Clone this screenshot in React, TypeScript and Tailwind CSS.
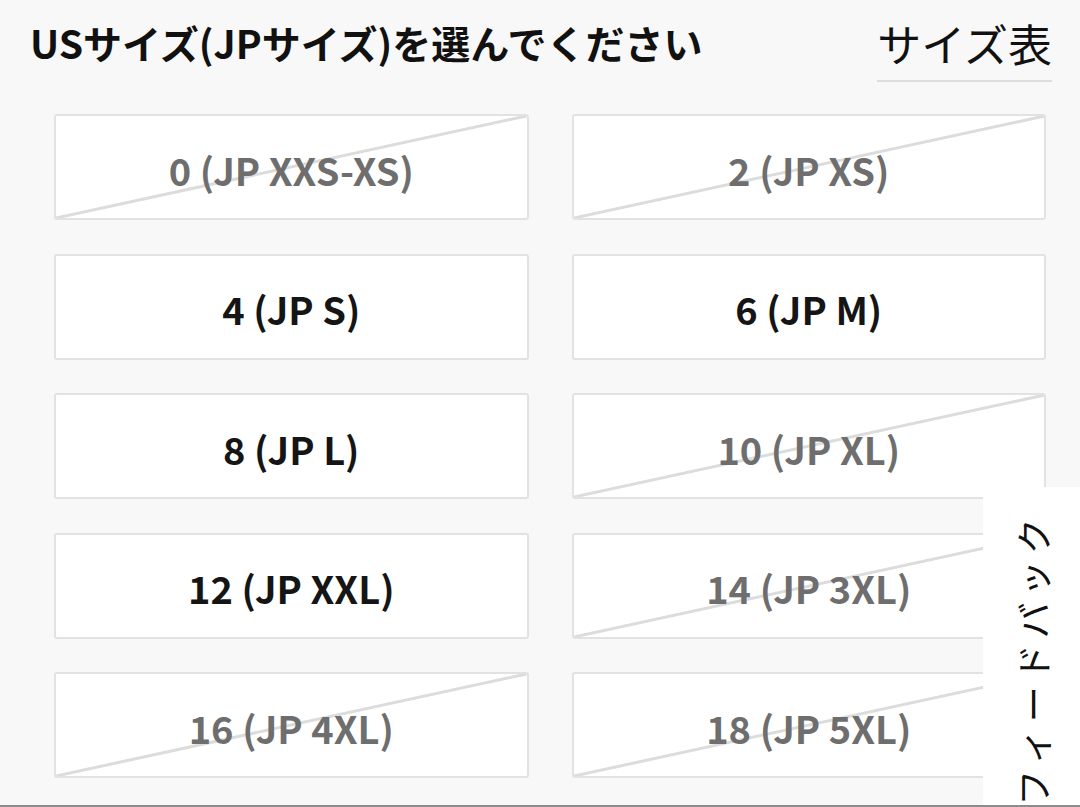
import React from "react";

type SizeOption = {
  us: string;
  jp: string;
  available: boolean;
};

const sizes: SizeOption[] = [
  { us: "0", jp: "XXS-XS", available: false },
  { us: "2", jp: "XS", available: false },
  { us: "4", jp: "S", available: true },
  { us: "6", jp: "M", available: true },
  { us: "8", jp: "L", available: true },
  { us: "10", jp: "XL", available: false },
  { us: "12", jp: "XXL", available: true },
  { us: "14", jp: "3XL", available: false },
  { us: "16", jp: "4XL", available: false },
  { us: "18", jp: "5XL", available: false },
];

const font = {
  fontFamily: '"Noto Sans CJK JP", "Noto Sans", sans-serif',
};

function SizeButton({ size }: { size: SizeOption }) {
  return (
    <button
      type="button"
      className="relative flex h-[106px] items-center justify-center overflow-hidden rounded-[3px] border-2 border-[#e2e2e2] bg-white"
    >
      {!size.available && (
        <svg
          className="absolute inset-0 h-full w-full"
          viewBox="0 0 100 100"
          preserveAspectRatio="none"
          aria-hidden
        >
          <line
            x1="0"
            y1="100"
            x2="100"
            y2="0"
            stroke="#dcdcdc"
            strokeWidth="3"
            vectorEffect="non-scaling-stroke"
          />
        </svg>
      )}
      <span
        className={
          size.available
            ? "relative pt-[4px] text-[38px] font-bold text-[#151515]"
            : "relative pt-[4px] text-[38px] font-bold text-[#6e6e6e]"
        }
      >
        {size.us} (JP {size.jp})
      </span>
    </button>
  );
}

export default function App() {
  return (
    <div
      className="relative h-[807px] w-[1080px] overflow-hidden border-b-2 border-[#8c8c8c] bg-[#f8f8f8]"
      style={font}
    >
      <div className="flex items-start justify-between pl-[30px] pr-[28px] pt-[14px]">
        <h2 className="text-[39px] font-bold leading-[56px] text-[#111]">
          USサイズ(JPサイズ)を選んでください
        </h2>
        <a className="border-b-2 border-[#dedede] pb-[8px] text-[44px] leading-[58px] text-[#111]">
          サイズ表
        </a>
      </div>

      <div className="mt-[32px] grid grid-cols-2 gap-x-[43px] gap-y-[33.5px] pl-[54px] pr-[34px]">
        {sizes.map((s) => (
          <SizeButton key={s.us} size={s} />
        ))}
      </div>

      <div className="absolute left-[983px] top-[487px] h-[340px] w-[97px] bg-white">
        <div className="flex h-[344px] w-full items-center justify-center">
          <span className="-rotate-90 whitespace-nowrap text-[36px] leading-[40px] tracking-[6px] text-[#111]">
            フィードバック
          </span>
        </div>
      </div>
    </div>
  );
}
